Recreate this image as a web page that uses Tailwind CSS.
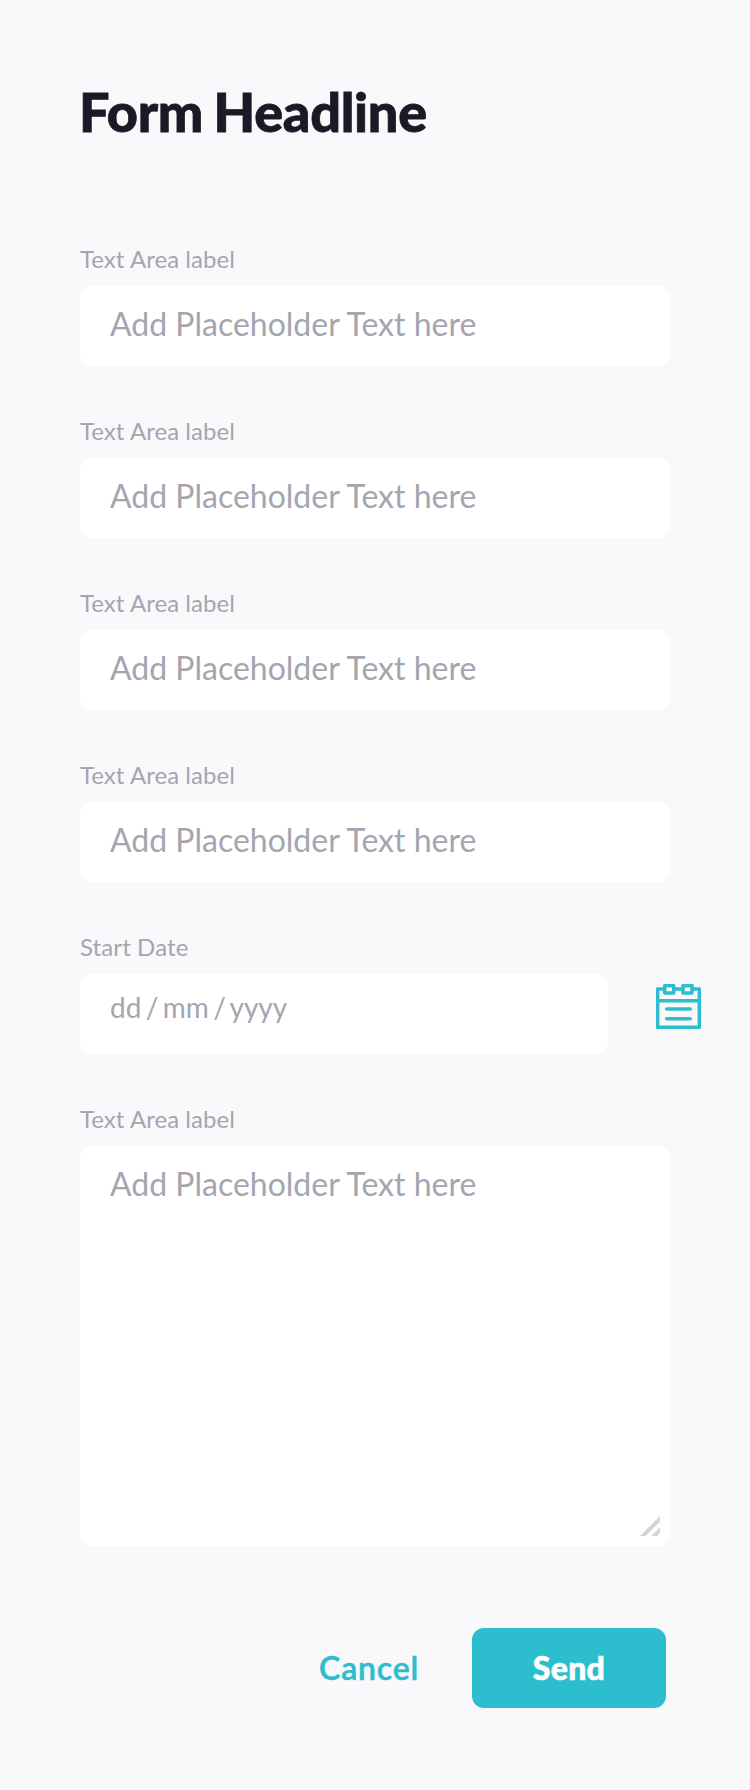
<!DOCTYPE html>
<html lang="en"><head><meta charset="utf-8"><title>Form</title>
<script src="https://cdn.jsdelivr.net/npm/@tailwindcss/browser@4"></script></head>
<body class="bg-[#f9f9fc] font-['Lato',sans-serif]">
<form class="w-[750px] h-[1790px] px-20 pt-[79px] text-[#a5a5b0]">
<h1 class="-ml-px text-[54px] leading-[66px] h-[161px] font-black tracking-[-0.3px] [word-spacing:-2px] text-[#1b1925] [-webkit-text-stroke:0.8px_#1b1925]">Form Headline</h1>
<div class="h-[172px]"><div class="h-[46px] pt-[4px] text-2xl leading-[30px] tracking-[0.05px]">Text Area label</div><div class="h-20 rounded-xl bg-white px-[30px] pt-[18px] text-[32px] leading-10">Add Placeholder Text here</div></div>
<div class="h-[172px]"><div class="h-[46px] pt-[4px] text-2xl leading-[30px] tracking-[0.05px]">Text Area label</div><div class="h-20 rounded-xl bg-white px-[30px] pt-[18px] text-[32px] leading-10">Add Placeholder Text here</div></div>
<div class="h-[172px]"><div class="h-[46px] pt-[4px] text-2xl leading-[30px] tracking-[0.05px]">Text Area label</div><div class="h-20 rounded-xl bg-white px-[30px] pt-[18px] text-[32px] leading-10">Add Placeholder Text here</div></div>
<div class="h-[172px]"><div class="h-[46px] pt-[4px] text-2xl leading-[30px] tracking-[0.05px]">Text Area label</div><div class="h-20 rounded-xl bg-white px-[30px] pt-[18px] text-[32px] leading-10">Add Placeholder Text here</div></div>
<div class="h-[172px]"><div class="h-[46px] pt-[4px] text-2xl leading-[30px] tracking-[0.1px]">Start Date</div><div class="flex gap-12"><div class="h-20 w-[528px] shrink-0 rounded-xl bg-white px-[30px] pt-[13px] text-[28px] leading-10 [word-spacing:-2.8px]">dd / mm / yyyy</div>
<svg class="mt-[10px] h-[45px] w-[45px] shrink-0" viewBox="48 42 135 135" fill="none" stroke="#2cbdce" stroke-width="10.500" stroke-linejoin="round" stroke-linecap="round"><path d="M74 57H53V172H178V57H156M101 57H129M53 92H178M80 117H151M80 146H151M74 47H101V69H74ZM129 47H156V69H129Z"/></svg></div></div>
<div><div class="h-[46px] pt-[4px] text-2xl leading-[30px] tracking-[0.05px]">Text Area label</div><div class="flex h-[400px] justify-between rounded-xl bg-white pl-[30px] pr-[10px] pt-[18px] text-[32px] leading-10"><span>Add Placeholder Text here</span><svg class="mb-[10px] h-5 w-5 self-end" viewBox="120 78 60 60" fill="#d4d4d8"><path d="M180 78V95L137 138H120ZM180 112V129L171 138H154Z"/></svg></div></div>
<div class="mt-[82px] mr-1 flex items-center justify-end gap-[53px] text-[32px] font-bold text-[#2cbdce]"><span class="font-semibold tracking-[0.8px] [-webkit-text-stroke:0.5px_#2cbdce]">Cancel</span><div class="flex h-20 w-[194px] items-center justify-center rounded-xl bg-[#2cbdce] font-black tracking-[0.3px] text-white [-webkit-text-stroke:0.6px_white]">Send</div></div>
</form></body></html>
